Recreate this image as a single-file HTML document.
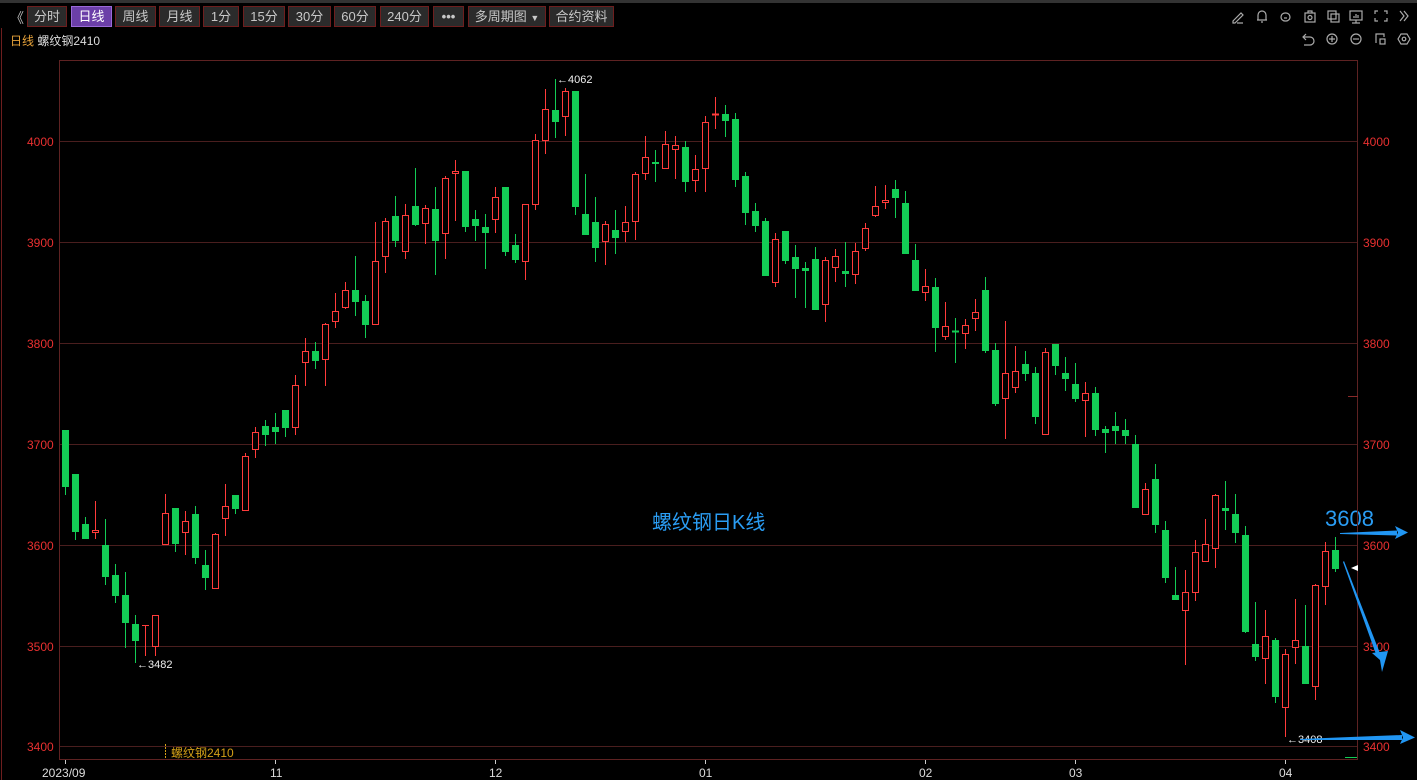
<!DOCTYPE html>
<html><head><meta charset="utf-8"><style>
html,body{margin:0;padding:0;background:#000;width:1417px;height:780px;overflow:hidden;font-family:"Liberation Sans","Noto Sans CJK SC",sans-serif}
.top{position:absolute;left:0;top:0;width:1417px;height:3px;background:#333}
.btn{position:absolute;top:6px;height:19px;line-height:19px;background:#2b2b2b;border:1px solid #6e1e1e;color:#c8c8c8;font-size:13px;text-align:center}
.sel{background:#6b3fa8;border-color:#9a6ad8;color:#fff}
.t{position:absolute;font-size:12px;white-space:nowrap}
svg{position:absolute;left:0;top:0}
</style></head><body>
<div class="top"></div>
<div class="t" style="left:10px;top:8px;color:#bbb;font-size:14px">《</div>
<div class="btn" style="left:27px;width:38px">分时</div>
<div class="btn sel" style="left:71px;width:39px">日线</div>
<div class="btn" style="left:115px;width:39px">周线</div>
<div class="btn" style="left:159px;width:39px">月线</div>
<div class="btn" style="left:203px;width:34px">1分</div>
<div class="btn" style="left:243px;width:40px">15分</div>
<div class="btn" style="left:288px;width:41px">30分</div>
<div class="btn" style="left:334px;width:40px">60分</div>
<div class="btn" style="left:380px;width:47px">240分</div>
<div class="btn" style="left:433px;width:29px;font-weight:bold">•••</div>
<div class="btn" style="left:468px;width:76px">多周期图 <span style="font-size:9px">▼</span></div>
<div class="btn" style="left:549px;width:63px">合约资料</div>
<div class="t" style="left:10px;top:32px"><span style="color:#e8a33a">日线</span> <span style="color:#ddd">螺纹钢2410</span></div>
<div class="t" style="left:652px;top:506px;color:#2a9df4;font-size:20px">螺纹钢日K线</div>
<div class="t" style="left:1325px;top:506px;color:#2a9df4;font-size:22px">3608</div>
<div class="t" style="left:137px;top:659px;color:#eee;font-size:11px">←3482</div>
<div class="t" style="left:557px;top:74px;color:#eee;font-size:11px">←4062</div>
<div class="t" style="left:1287px;top:734px;color:#eee;font-size:11px">←3408</div>
<div class="t" style="left:171px;top:744px;color:#d4a017">螺纹钢2410</div>
<svg width="1417" height="780" xmlns="http://www.w3.org/2000/svg">
<line x1="1.5" y1="28" x2="1.5" y2="780" stroke="#6e1e1e"/>
<g stroke="#4a1e1e">
<line x1="59" y1="141.5" x2="1358" y2="141.5"/><line x1="59" y1="242.5" x2="1358" y2="242.5"/><line x1="59" y1="343.5" x2="1358" y2="343.5"/><line x1="59" y1="444.5" x2="1358" y2="444.5"/><line x1="59" y1="545.5" x2="1358" y2="545.5"/><line x1="59" y1="646.5" x2="1358" y2="646.5"/><line x1="59" y1="746.5" x2="1358" y2="746.5"/>
</g>
<rect x="59.5" y="60.5" width="1298" height="699" stroke="#5e2222" fill="none"/>
<line x1="1348" y1="396.5" x2="1358" y2="396.5" stroke="#8a2a2a"/>
<line x1="1345" y1="757.5" x2="1357" y2="757.5" stroke="#13cc55"/>
<line x1="165.5" y1="744" x2="165.5" y2="758" stroke="#d4a017" stroke-dasharray="2,1"/>
<g stroke="#ccc"><line x1="65.5" y1="760" x2="65.5" y2="764"/><line x1="275.5" y1="760" x2="275.5" y2="764"/><line x1="495.5" y1="760" x2="495.5" y2="764"/><line x1="705.5" y1="760" x2="705.5" y2="764"/><line x1="925.5" y1="760" x2="925.5" y2="764"/><line x1="1075.5" y1="760" x2="1075.5" y2="764"/><line x1="1285.5" y1="760" x2="1285.5" y2="764"/></g>
<g font-family="Liberation Sans,sans-serif" font-size="12" fill="#ddd">
<text x="42" y="777">2023/09</text><text x="270" y="777">11</text><text x="489" y="777">12</text><text x="699" y="777">01</text><text x="919" y="777">02</text><text x="1069" y="777">03</text><text x="1279" y="777">04</text>
</g>
<g font-family="Liberation Sans,sans-serif" font-size="12" fill="#e83030">
<text x="27" y="146">4000</text><text x="27" y="247">3900</text><text x="27" y="348">3800</text><text x="27" y="449">3700</text><text x="27" y="550">3600</text><text x="27" y="651">3500</text><text x="27" y="751">3400</text>
<text x="1363" y="146">4000</text><text x="1363" y="247">3900</text><text x="1363" y="348">3800</text><text x="1363" y="449">3700</text><text x="1363" y="550">3600</text><text x="1363" y="651">3500</text><text x="1363" y="751">3400</text>
</g>
<g stroke="#13cc55" fill="#13cc55">
<line x1="65.5" y1="430" x2="65.5" y2="495"/><rect x="62.5" y="430.5" width="6" height="56"/>
<line x1="75.5" y1="474" x2="75.5" y2="540"/><rect x="72.5" y="474.5" width="6" height="57"/>
<line x1="85.5" y1="517" x2="85.5" y2="539"/><rect x="82.5" y="524.5" width="6" height="14"/>
<line x1="105.5" y1="519" x2="105.5" y2="585"/><rect x="102.5" y="545.5" width="6" height="31"/>
<line x1="115.5" y1="564" x2="115.5" y2="603"/><rect x="112.5" y="575.5" width="6" height="20"/>
<line x1="125.5" y1="572" x2="125.5" y2="648"/><rect x="122.5" y="595.5" width="6" height="27"/>
<line x1="135.5" y1="615" x2="135.5" y2="663"/><rect x="132.5" y="624.5" width="6" height="16"/>
<line x1="175.5" y1="508" x2="175.5" y2="552"/><rect x="172.5" y="508.5" width="6" height="35"/>
<line x1="195.5" y1="506" x2="195.5" y2="564"/><rect x="192.5" y="514.5" width="6" height="43"/>
<line x1="205.5" y1="550" x2="205.5" y2="590"/><rect x="202.5" y="565.5" width="6" height="12"/>
<line x1="235.5" y1="495" x2="235.5" y2="514"/><rect x="232.5" y="495.5" width="6" height="13"/>
<line x1="265.5" y1="420" x2="265.5" y2="446"/><rect x="262.5" y="426.5" width="6" height="8"/>
<line x1="275.5" y1="413" x2="275.5" y2="444"/><rect x="272.5" y="427.5" width="6" height="4"/>
<line x1="285.5" y1="410" x2="285.5" y2="437"/><rect x="282.5" y="410.5" width="6" height="17"/>
<line x1="315.5" y1="342" x2="315.5" y2="369"/><rect x="312.5" y="351.5" width="6" height="9"/>
<line x1="355.5" y1="256" x2="355.5" y2="316"/><rect x="352.5" y="290.5" width="6" height="11"/>
<line x1="365.5" y1="295" x2="365.5" y2="338"/><rect x="362.5" y="301.5" width="6" height="23"/>
<line x1="395.5" y1="196" x2="395.5" y2="247"/><rect x="392.5" y="216.5" width="6" height="24"/>
<line x1="415.5" y1="168" x2="415.5" y2="226"/><rect x="412.5" y="206.5" width="6" height="18"/>
<line x1="435.5" y1="187" x2="435.5" y2="275"/><rect x="432.5" y="209.5" width="6" height="31"/>
<line x1="465.5" y1="171" x2="465.5" y2="232"/><rect x="462.5" y="171.5" width="6" height="55"/>
<line x1="475.5" y1="210" x2="475.5" y2="241"/><rect x="472.5" y="219.5" width="6" height="6"/>
<line x1="485.5" y1="214" x2="485.5" y2="269"/><rect x="482.5" y="227.5" width="6" height="5"/>
<line x1="505.5" y1="187" x2="505.5" y2="256"/><rect x="502.5" y="187.5" width="6" height="64"/>
<line x1="515.5" y1="234" x2="515.5" y2="263"/><rect x="512.5" y="245.5" width="6" height="14"/>
<line x1="555.5" y1="79" x2="555.5" y2="138"/><rect x="552.5" y="110.5" width="6" height="11"/>
<line x1="575.5" y1="91" x2="575.5" y2="215"/><rect x="572.5" y="91.5" width="6" height="115"/>
<line x1="585.5" y1="174" x2="585.5" y2="235"/><rect x="582.5" y="214.5" width="6" height="20"/>
<line x1="595.5" y1="197" x2="595.5" y2="262"/><rect x="592.5" y="222.5" width="6" height="25"/>
<line x1="615.5" y1="210" x2="615.5" y2="254"/><rect x="612.5" y="230.5" width="6" height="7"/>
<line x1="655.5" y1="150" x2="655.5" y2="182"/><rect x="652.5" y="162.5" width="6" height="1"/>
<line x1="685.5" y1="141" x2="685.5" y2="192"/><rect x="682.5" y="147.5" width="6" height="34"/>
<line x1="725.5" y1="105" x2="725.5" y2="137"/><rect x="722.5" y="114.5" width="6" height="6"/>
<line x1="735.5" y1="113" x2="735.5" y2="187"/><rect x="732.5" y="119.5" width="6" height="60"/>
<line x1="745.5" y1="172" x2="745.5" y2="225"/><rect x="742.5" y="176.5" width="6" height="36"/>
<line x1="755.5" y1="203" x2="755.5" y2="232"/><rect x="752.5" y="211.5" width="6" height="14"/>
<line x1="765.5" y1="218" x2="765.5" y2="276"/><rect x="762.5" y="221.5" width="6" height="54"/>
<line x1="785.5" y1="231" x2="785.5" y2="264"/><rect x="782.5" y="231.5" width="6" height="29"/>
<line x1="795.5" y1="245" x2="795.5" y2="298"/><rect x="792.5" y="257.5" width="6" height="11"/>
<line x1="805.5" y1="262" x2="805.5" y2="308"/><rect x="802.5" y="268.5" width="6" height="2"/>
<line x1="815.5" y1="247" x2="815.5" y2="310"/><rect x="812.5" y="259.5" width="6" height="50"/>
<line x1="845.5" y1="242" x2="845.5" y2="287"/><rect x="842.5" y="271.5" width="6" height="2"/>
<line x1="895.5" y1="180" x2="895.5" y2="218"/><rect x="892.5" y="189.5" width="6" height="8"/>
<line x1="905.5" y1="191" x2="905.5" y2="254"/><rect x="902.5" y="203.5" width="6" height="50"/>
<line x1="915.5" y1="244" x2="915.5" y2="291"/><rect x="912.5" y="260.5" width="6" height="30"/>
<line x1="935.5" y1="278" x2="935.5" y2="352"/><rect x="932.5" y="287.5" width="6" height="40"/>
<line x1="955.5" y1="318" x2="955.5" y2="363"/><rect x="952.5" y="331" width="6" height="1"/>
<line x1="985.5" y1="277" x2="985.5" y2="353"/><rect x="982.5" y="290.5" width="6" height="60"/>
<line x1="995.5" y1="343" x2="995.5" y2="406"/><rect x="992.5" y="350.5" width="6" height="53"/>
<line x1="1025.5" y1="351" x2="1025.5" y2="381"/><rect x="1022.5" y="364.5" width="6" height="9"/>
<line x1="1035.5" y1="367" x2="1035.5" y2="424"/><rect x="1032.5" y="373.5" width="6" height="43"/>
<line x1="1055.5" y1="344" x2="1055.5" y2="375"/><rect x="1052.5" y="344.5" width="6" height="21"/>
<line x1="1065.5" y1="357" x2="1065.5" y2="391"/><rect x="1062.5" y="373.5" width="6" height="5"/>
<line x1="1075.5" y1="363" x2="1075.5" y2="402"/><rect x="1072.5" y="384.5" width="6" height="14"/>
<line x1="1095.5" y1="387" x2="1095.5" y2="436"/><rect x="1092.5" y="393.5" width="6" height="36"/>
<line x1="1105.5" y1="426" x2="1105.5" y2="453"/><rect x="1102.5" y="429.5" width="6" height="3"/>
<line x1="1115.5" y1="412" x2="1115.5" y2="444"/><rect x="1112.5" y="426.5" width="6" height="4"/>
<line x1="1125.5" y1="419" x2="1125.5" y2="444"/><rect x="1122.5" y="430.5" width="6" height="5"/>
<line x1="1135.5" y1="435" x2="1135.5" y2="508"/><rect x="1132.5" y="444.5" width="6" height="63"/>
<line x1="1155.5" y1="464" x2="1155.5" y2="533"/><rect x="1152.5" y="479.5" width="6" height="45"/>
<line x1="1165.5" y1="521" x2="1165.5" y2="583"/><rect x="1162.5" y="530.5" width="6" height="47"/>
<line x1="1175.5" y1="567" x2="1175.5" y2="600"/><rect x="1172.5" y="595.5" width="6" height="4"/>
<line x1="1225.5" y1="481" x2="1225.5" y2="530"/><rect x="1222.5" y="508.5" width="6" height="2"/>
<line x1="1235.5" y1="494" x2="1235.5" y2="543"/><rect x="1232.5" y="514.5" width="6" height="18"/>
<line x1="1245.5" y1="526" x2="1245.5" y2="633"/><rect x="1242.5" y="535.5" width="6" height="96"/>
<line x1="1255.5" y1="602" x2="1255.5" y2="661"/><rect x="1252.5" y="644.5" width="6" height="12"/>
<line x1="1275.5" y1="638" x2="1275.5" y2="703"/><rect x="1272.5" y="640.5" width="6" height="56"/>
<line x1="1305.5" y1="605" x2="1305.5" y2="684"/><rect x="1302.5" y="646.5" width="6" height="37"/>
<line x1="1335.5" y1="537" x2="1335.5" y2="572"/><rect x="1332.5" y="550.5" width="6" height="18"/>
</g>
<g stroke="#ff3b3b" fill="#000">
<line x1="95.5" y1="501" x2="95.5" y2="539"/><rect x="92.5" y="530.5" width="6" height="2"/>
<line x1="145.5" y1="625" x2="145.5" y2="656"/><line x1="142" y1="625.5" x2="149" y2="625.5"/>
<line x1="155.5" y1="615" x2="155.5" y2="656"/><rect x="152.5" y="615.5" width="6" height="31"/>
<line x1="165.5" y1="494" x2="165.5" y2="545"/><rect x="162.5" y="513.5" width="6" height="31"/>
<line x1="185.5" y1="511" x2="185.5" y2="555"/><rect x="182.5" y="521.5" width="6" height="11"/>
<line x1="215.5" y1="533" x2="215.5" y2="589"/><rect x="212.5" y="534.5" width="6" height="54"/>
<line x1="225.5" y1="484" x2="225.5" y2="536"/><rect x="222.5" y="506.5" width="6" height="12"/>
<line x1="245.5" y1="453" x2="245.5" y2="511"/><rect x="242.5" y="456.5" width="6" height="54"/>
<line x1="255.5" y1="427" x2="255.5" y2="458"/><rect x="252.5" y="432.5" width="6" height="17"/>
<line x1="295.5" y1="375" x2="295.5" y2="435"/><rect x="292.5" y="385.5" width="6" height="42"/>
<line x1="305.5" y1="338" x2="305.5" y2="386"/><rect x="302.5" y="351.5" width="6" height="11"/>
<line x1="325.5" y1="323" x2="325.5" y2="386"/><rect x="322.5" y="324.5" width="6" height="35"/>
<line x1="335.5" y1="293" x2="335.5" y2="328"/><rect x="332.5" y="311.5" width="6" height="10"/>
<line x1="345.5" y1="282" x2="345.5" y2="309"/><rect x="342.5" y="290.5" width="6" height="17"/>
<line x1="375.5" y1="222" x2="375.5" y2="325"/><rect x="372.5" y="261.5" width="6" height="63"/>
<line x1="385.5" y1="218" x2="385.5" y2="273"/><rect x="382.5" y="221.5" width="6" height="35"/>
<line x1="405.5" y1="204" x2="405.5" y2="259"/><rect x="402.5" y="215.5" width="6" height="36"/>
<line x1="425.5" y1="205" x2="425.5" y2="244"/><rect x="422.5" y="208.5" width="6" height="15"/>
<line x1="445.5" y1="176" x2="445.5" y2="259"/><rect x="442.5" y="178.5" width="6" height="55"/>
<line x1="455.5" y1="160" x2="455.5" y2="221"/><rect x="452.5" y="171.5" width="6" height="2"/>
<line x1="495.5" y1="187" x2="495.5" y2="233"/><rect x="492.5" y="197.5" width="6" height="22"/>
<line x1="525.5" y1="204" x2="525.5" y2="280"/><rect x="522.5" y="204.5" width="6" height="57"/>
<line x1="535.5" y1="134" x2="535.5" y2="210"/><rect x="532.5" y="140.5" width="6" height="64"/>
<line x1="545.5" y1="89" x2="545.5" y2="154"/><rect x="542.5" y="109.5" width="6" height="31"/>
<line x1="565.5" y1="88" x2="565.5" y2="136"/><rect x="562.5" y="91.5" width="6" height="25"/>
<line x1="605.5" y1="221" x2="605.5" y2="265"/><rect x="602.5" y="224.5" width="6" height="17"/>
<line x1="625.5" y1="206" x2="625.5" y2="242"/><rect x="622.5" y="222.5" width="6" height="9"/>
<line x1="635.5" y1="172" x2="635.5" y2="240"/><rect x="632.5" y="174.5" width="6" height="47"/>
<line x1="645.5" y1="136" x2="645.5" y2="180"/><rect x="642.5" y="157.5" width="6" height="16"/>
<line x1="665.5" y1="131" x2="665.5" y2="169"/><rect x="662.5" y="144.5" width="6" height="24"/>
<line x1="675.5" y1="136" x2="675.5" y2="179"/><rect x="672.5" y="145.5" width="6" height="4"/>
<line x1="695.5" y1="155" x2="695.5" y2="192"/><rect x="692.5" y="169.5" width="6" height="11"/>
<line x1="705.5" y1="116" x2="705.5" y2="192"/><rect x="702.5" y="122.5" width="6" height="46"/>
<line x1="715.5" y1="97" x2="715.5" y2="129"/><line x1="712" y1="114.5" x2="719" y2="114.5" stroke-width="2"/>
<line x1="775.5" y1="233" x2="775.5" y2="287"/><rect x="772.5" y="239.5" width="6" height="43"/>
<line x1="825.5" y1="257" x2="825.5" y2="322"/><rect x="822.5" y="260.5" width="6" height="44"/>
<line x1="835.5" y1="249" x2="835.5" y2="282"/><rect x="832.5" y="256.5" width="6" height="11"/>
<line x1="855.5" y1="243" x2="855.5" y2="284"/><rect x="852.5" y="251.5" width="6" height="23"/>
<line x1="865.5" y1="223" x2="865.5" y2="251"/><rect x="862.5" y="228.5" width="6" height="20"/>
<line x1="875.5" y1="186" x2="875.5" y2="217"/><rect x="872.5" y="206.5" width="6" height="9"/>
<line x1="885.5" y1="185" x2="885.5" y2="209"/><rect x="882.5" y="200.5" width="6" height="2"/>
<line x1="925.5" y1="269" x2="925.5" y2="301"/><rect x="922.5" y="286.5" width="6" height="6"/>
<line x1="945.5" y1="302" x2="945.5" y2="340"/><rect x="942.5" y="326.5" width="6" height="10"/>
<line x1="965.5" y1="319" x2="965.5" y2="349"/><rect x="962.5" y="325.5" width="6" height="8"/>
<line x1="975.5" y1="299" x2="975.5" y2="331"/><rect x="972.5" y="312.5" width="6" height="6"/>
<line x1="1005.5" y1="321" x2="1005.5" y2="439"/><rect x="1002.5" y="373.5" width="6" height="25"/>
<line x1="1015.5" y1="346" x2="1015.5" y2="393"/><rect x="1012.5" y="371.5" width="6" height="16"/>
<line x1="1045.5" y1="348" x2="1045.5" y2="435"/><rect x="1042.5" y="352.5" width="6" height="82"/>
<line x1="1085.5" y1="382" x2="1085.5" y2="437"/><rect x="1082.5" y="393.5" width="6" height="7"/>
<line x1="1145.5" y1="483" x2="1145.5" y2="515"/><rect x="1142.5" y="489.5" width="6" height="25"/>
<line x1="1185.5" y1="570" x2="1185.5" y2="665"/><rect x="1182.5" y="592.5" width="6" height="18"/>
<line x1="1195.5" y1="540" x2="1195.5" y2="601"/><rect x="1192.5" y="552.5" width="6" height="40"/>
<line x1="1205.5" y1="519" x2="1205.5" y2="562"/><rect x="1202.5" y="544.5" width="6" height="17"/>
<line x1="1215.5" y1="494" x2="1215.5" y2="568"/><rect x="1212.5" y="495.5" width="6" height="53"/>
<line x1="1265.5" y1="610" x2="1265.5" y2="684"/><rect x="1262.5" y="636.5" width="6" height="22"/>
<line x1="1285.5" y1="649" x2="1285.5" y2="737"/><rect x="1282.5" y="654.5" width="6" height="53"/>
<line x1="1295.5" y1="599" x2="1295.5" y2="664"/><rect x="1292.5" y="640.5" width="6" height="7"/>
<line x1="1315.5" y1="584" x2="1315.5" y2="700"/><rect x="1312.5" y="585.5" width="6" height="101"/>
<line x1="1325.5" y1="542" x2="1325.5" y2="605"/><rect x="1322.5" y="551.5" width="6" height="35"/>
</g>
<polygon points="1351,568 1358,565 1358,571" fill="#fff"/>
<g fill="#2196f3">
<polygon points="1340,533 1397,530.5 1397,535.5 1340,534"/><polygon points="1395,526 1408,532.5 1395,539 1398,532.5"/>
<polygon points="1344,561 1381,656 1377,657 1343,562"/><polygon points="1372,653 1388,651 1382,672 1380,660"/>
<polygon points="1300,739 1402,735 1402,740 1300,740"/><polygon points="1400,730 1415,737.5 1400,744 1403,737.5"/>
</g>
<g stroke="#aaa" fill="none" stroke-width="1.2">
<path d="M1233,21 L1241,13 L1243,15 L1235,23 L1233,23 Z M1237,23 H1243"/>
<path d="M1258,20 V15 a4,4 0 0 1 8,0 V20 H1257 H1267 M1261,22 h2"/>
<rect x="1281" y="13" width="9" height="8" rx="4"/><line x1="1284" y1="18" x2="1287" y2="18"/>
<rect x="1305" y="13" width="10" height="9"/><circle cx="1310" cy="17.5" r="2"/><path d="M1308,13 v-2 h4 v2"/>
<rect x="1328" y="11" width="8" height="8"/><rect x="1331" y="14" width="8" height="8"/>
<rect x="1350" y="11" width="12" height="9"/><path d="M1356,20 v3 M1352,23 h8 M1354,18 v-2 M1356,18 v-4 M1358,18 v-3"/>
<path d="M1375,14 v-3 h3 M1384,11 h3 v3 M1387,18 v3 h-3 M1378,21 h-3 v-3"/>
<path d="M1400,11 l4,5 l-4,5 M1404,11 l4,5 l-4,5"/>
<path d="M1306,34 l-3,3 l3,3 M1303,37 h7 a4,4 0 0 1 0,8 h-6"/>
<circle cx="1332" cy="39" r="5"/><path d="M1329,39 h6 M1332,36 v6"/>
<circle cx="1356" cy="39" r="5"/><path d="M1353,39 h6"/>
<path d="M1376,43 v-9 h8 v3"/><rect x="1380" y="39" width="5" height="5"/>
<polygon points="1401,34 1407,34 1410,39 1407,44 1401,44 1398,39"/><circle cx="1404" cy="39" r="1.8"/>
</g>
</svg>
</body></html>
